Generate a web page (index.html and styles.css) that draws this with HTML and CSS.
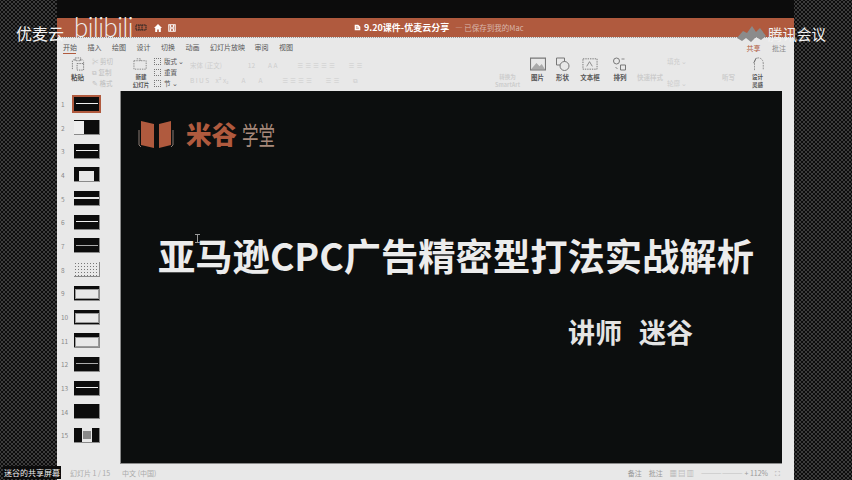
FILE: index.html
```html
<!DOCTYPE html>
<html lang="zh-CN">
<head>
  <meta charset="UTF-8">
  <title>优麦云 - 腾讯会议共享屏幕</title>
  <link rel="stylesheet" href="styles.css">
</head>
<body>
  <div class="screen">
    <div class="side"></div>

    <div class="app">
      <div class="titlebar">
        <div class="quick">
          <svg class="qicon wide" viewBox="0 0 12 7"><path d="M1 1 H11 V6 H1 Z M4 1 V6 M7 1 V6" fill="none" stroke="#222" stroke-dasharray="1.500 .5"/></svg>
          <svg class="qicon" viewBox="0 0 10 10"><path d="M5 0 L10 5 L8.5 5 L8.5 10 L6 10 L6 7 L4 7 L4 10 L1.500 10 L1.500 5 L0 5 Z" fill="#fff"/></svg>
          <svg class="qicon" viewBox="0 0 10 10"><path d="M1 1 H9 V9 H1 Z M3 1 V4 H7 V1 M3 9 V6 H7 V9" fill="none" stroke="#fff" stroke-width="1.300"/></svg>
        </div>
        <div class="doc">
          <svg class="qicon small" viewBox="0 0 10 10"><path d="M1 1 H6 L9 4 V9 H1 Z" fill="#fff"/><path d="M3 4 H5 M3 6 H7" stroke="#b05a3e"/></svg>
          <span class="doc-name">9.20课件-优麦云分享</span>
          <span class="doc-state">— 已保存到我的Mac</span>
        </div>
      </div>

      <div class="tabs">
        <span class="tab active">开始</span>
        <span class="tab">插入</span>
        <span class="tab">绘图</span>
        <span class="tab">设计</span>
        <span class="tab">切换</span>
        <span class="tab">动画</span>
        <span class="tab">幻灯片放映</span>
        <span class="tab">审阅</span>
        <span class="tab">视图</span>
        <span class="tab-right">共享</span>
        <span class="tab-right">批注</span>
      </div>

      <div class="ribbon">
        <div class="rb w25 first">
          <svg class="rb-icon" viewBox="0 0 16 15"><path d="M3 3 H6 M10 3 H13 M2 4 V13 M14 7 V4 M7 7 H14 V14 H7 Z M5 1 H11 V4 H5 Z" fill="none" stroke="#777" stroke-dasharray="1.500 1"/></svg>
          <span class="rb-label">粘贴</span>
        </div>
        <div class="rb-col w40 faint">
          <span>✂ 剪切</span>
          <span>⧉ 复制</span>
          <span>✎ 格式</span>
        </div>
        <div class="rb w22">
          <svg class="rb-icon" viewBox="0 0 17 13"><path d="M1 3 H14 V12 H1 Z M4 1 H8 V3" fill="none" stroke="#888" stroke-dasharray="1.500 1"/></svg>
          <span class="rb-label two">新建<br>幻灯片</span>
        </div>
        <div class="rb-col w38">
          <span><i class="box"></i>版式 ⌄</span>
          <span><i class="box"></i>重置</span>
          <span><i class="box"></i>节 ⌄</span>
        </div>
        <div class="rb-middle w300 fainter">
          <span>宋体 (正文)　　　　12　　A A　　　≡ ≡ ≡ ≡ ≡　　≡ ≡</span>
          <span>B I U S　x² x₂　　A　　A　　　≡ ≡ ≡ ≡　　≡ ≡　　⧉</span>
        </div>
        <div class="rb w35 fainter">
          <span class="rb-icon"></span>
          <span class="rb-label two">转换为<br>SmartArt</span>
        </div>
        <div class="rb w25">
          <svg class="rb-icon" viewBox="0 0 15 12"><path d="M.5 .5 H14.500 V11.500 H.5 Z" fill="none" stroke="#777"/><path d="M1 11 L6 5 L9 8 L11 6 L14 11 Z" fill="#aaa"/></svg>
          <span class="rb-label">图片</span>
        </div>
        <div class="rb w25">
          <svg class="rb-icon" viewBox="0 0 15 14"><path d="M1 1 H9 V8 H1 Z" fill="none" stroke="#777"/><circle cx="9" cy="9" r="4.500" fill="#e8e8e8" stroke="#777"/></svg>
          <span class="rb-label">形状</span>
        </div>
        <div class="rb w30">
          <svg class="rb-icon" viewBox="0 0 17 13"><path d="M1 1 H16 V12 H1 Z" fill="none" stroke="#777" stroke-dasharray="1.500 1"/><path d="M5 9 L8 4 L11 9" fill="none" stroke="#888"/></svg>
          <span class="rb-label">文本框</span>
        </div>
        <div class="rb w30">
          <svg class="rb-icon" viewBox="0 0 15 14"><circle cx="4" cy="4" r="3" fill="none" stroke="#777"/><path d="M8 8 H13 V13 H8 Z" fill="none" stroke="#777"/><path d="M9 2 H12 M3 10 L5 12" stroke="#888"/></svg>
          <span class="rb-label">排列</span>
        </div>
        <div class="rb w30 fainter">
          <span class="rb-icon"></span>
          <span class="rb-label">快速样式</span>
        </div>
        <div class="rb-col w47 fainter">
          <span>填充 ⌄</span>
          <span>轮廓 ⌄</span>
        </div>
        <div class="rb w33 fainter">
          <span class="rb-icon"></span>
          <span class="rb-label">听写</span>
        </div>
        <div class="rb w25">
          <svg class="rb-icon" viewBox="0 0 14 16"><path d="M3 15 V7 Q3 1 8 1 Q13 2 13 8 V15" fill="none" stroke="#888" stroke-dasharray="2 1"/><path d="M2 7 L5 1" stroke="#666"/></svg>
          <span class="rb-label two">设计<br>灵感</span>
        </div>
      </div>

      <div class="workspace">
        <div class="slides">
          <div class="row"><span class="num">1</span><div class="thumb current"><i class="line"></i></div></div>
          <div class="row"><span class="num">2</span><div class="thumb t-left"><i class="block"></i></div></div>
          <div class="row"><span class="num">3</span><div class="thumb"><i class="line"></i></div></div>
          <div class="row"><span class="num">4</span><div class="thumb t-box"><i class="paper small"></i></div></div>
          <div class="row"><span class="num">5</span><div class="thumb t-band"></div></div>
          <div class="row"><span class="num">6</span><div class="thumb"><i class="line"></i></div></div>
          <div class="row"><span class="num">7</span><div class="thumb"><i class="line grey"></i></div></div>
          <div class="row"><span class="num">8</span><div class="thumb t-dots"></div></div>
          <div class="row"><span class="num">9</span><div class="thumb t-box"><i class="paper"></i></div></div>
          <div class="row"><span class="num">10</span><div class="thumb t-box"><i class="paper"></i></div></div>
          <div class="row"><span class="num">11</span><div class="thumb t-box"><i class="paper"></i></div></div>
          <div class="row"><span class="num">12</span><div class="thumb"><i class="line grey"></i></div></div>
          <div class="row"><span class="num">13</span><div class="thumb"><i class="line"></i></div></div>
          <div class="row"><span class="num">14</span><div class="thumb"></div></div>
          <div class="row"><span class="num">15</span><div class="thumb t-video"><i class="play"></i></div></div>
        </div>

        <div class="slide">
          <div class="logo">
            <svg class="book" viewBox="0 0 37 29">
              <path d="M3 1 L16 4 V28 L3 25 Z M21 4 L33 1 V25 L21 28 Z" fill="#b05a3e"/>
              <path d="M1 10 V25 L3 27 M35 10 V25 L33 27" fill="none" stroke="#8a7a72"/>
            </svg>
            <span class="logo-main">米谷</span>
            <span class="logo-sub">学堂</span>
          </div>
          <h1 class="headline">亚马逊CPC广告精密型打法实战解析</h1>
          <p class="speaker">讲师<span class="speaker-name">迷谷</span></p>
          <svg class="cursor" viewBox="0 0 5 9"><path d="M0 .5 H5 M2.500 .5 V8.500 M0 8.500 H5" stroke="#999" fill="none"/></svg>
        </div>
      </div>

      <div class="statusbar">
        <span>幻灯片 1 / 15</span>
        <span>中文 (中国)</span>
        <span class="status-right">备注　批注　▦ ▤ ▥　—————— + 112%　⛶</span>
      </div>
    </div>

    <div class="side"></div>
  </div>

  <div class="mark mark-left">优麦云</div>
  <div class="mark-bili">bilibili</div>
  <div class="mark mark-right">
    <svg class="meet" viewBox="0 0 29 18"><path d="M0 13 L6 6 L10 8 L15 1 L19 7 L23 3 L29 11 L24 15 L19 12 L14 17 L9 13 L5 16 Z" fill="#8b8b8b"/></svg>
    腾讯会议
  </div>
  <div class="share-tag">迷谷的共享屏幕</div>
</body>
</html>
```

FILE: styles.css
```css
* { box-sizing: border-box; }
html, body { margin: 0; padding: 0; }
body { width: 852px; height: 480px; overflow: hidden; position: relative; background: #0c0c0c; font-family: "Noto Sans CJK SC", "Noto Sans", sans-serif; }

.screen { display: grid; grid-template-columns: 57px 737px 58px; height: 480px; }
.side { background-color: #0c0c0c; background-image: radial-gradient(#a6a6a6 .5px, transparent .8px), radial-gradient(#a6a6a6 .5px, transparent .8px); background-size: 4px 4px; background-position: 0 0, 2px 2px; }

.app { display: flex; flex-direction: column; padding-top: 18px; background: #0c0c0c; }

.titlebar { height: 19px; flex: none; display: flex; align-items: center; background: #b05a3e; color: #fff; font-size: 8px; }
.quick { display: flex; align-items: center; gap: 6px; margin-left: 78px; }
.qicon { width: 8px; height: 8px; display: block; }
.qicon.wide { width: 12px; height: 7px; margin-right: 1px; }
.qicon.small { width: 7px; height: 7px; }
.doc { display: flex; align-items: center; gap: 3px; margin-left: 178px; }
.doc-name { font-size: 9px; font-weight: bold; }
.doc-state { margin-left: 3px; color: #d9b8ac; font-size: 7.500px; }

.tabs { height: 18px; flex: none; display: flex; align-items: center; gap: 11.500px; padding-left: 6px; background: #e8e8e8; border-top: 1px dotted #999; font-size: 7px; color: #555; }
.tab { line-height: 14px; height: 14px; width: 13px; white-space: nowrap; }
.tab:nth-child(7) { width: 33px; }
.tab.active { border-bottom: 1px solid #b05a3e; }
.tab-right { color: #8a8a8a; line-height: 9px; margin-top: 4px; }
.tab:nth-child(9) + .tab-right { margin-left: auto; color: #b05a3e; }
.tab-right:last-child { margin-right: 8px; }

.ribbon { height: 36px; flex: none; display: flex; background: #e8e8e8; color: #555; font-size: 6.500px; line-height: 8px; }
.rb { flex: none; display: flex; flex-direction: column; align-items: center; padding-top: 2px; text-align: center; }
.rb.first { margin-left: 8px; }
.rb-icon { width: 16px; height: 14px; display: block; flex: none; }
.rb-label { margin-top: 2px; font-weight: bold; white-space: nowrap; }
.rb-label.two { font-size: 5.500px; }
.rb-col { flex: none; display: flex; flex-direction: column; justify-content: space-between; padding: 2px 0 4px 2px; white-space: nowrap; }
.rb-middle { flex: none; display: flex; flex-direction: column; justify-content: space-around; white-space: pre; overflow: hidden; padding: 2px 0 3px; }
.faint { color: #bdbdbd; }
.fainter { color: #cdcdcd; }
.box { display: inline-block; width: 7px; height: 7px; margin-right: 3px; border: 1px dotted #777; vertical-align: -1px; }
.w22 { width: 22px; }
.w25 { width: 25px; }
.w30 { width: 30px; }
.w33 { width: 33px; }
.w35 { width: 35px; }
.w38 { width: 38px; }
.w40 { width: 40px; }
.w47 { width: 47px; }
.w300 { width: 300px; }

.workspace { flex: 1; min-height: 0; display: flex; background: #e8e8e8; }
.slides { width: 63px; flex: none; padding-top: 1px; }
.row { height: 23.700px; display: flex; align-items: center; }
.num { width: 17px; padding-left: 4px; font-size: 6.500px; color: #888; }
.thumb { width: 26px; height: 15px; display: flex; align-items: center; justify-content: center; background: #0c0c0c; border-right: 1px solid #8a8a8a; border-bottom: 1px solid #8a8a8a; overflow: hidden; }
.thumb.current { height: 18px; width: 29px; margin-left: -2px; border: 2px solid #b05a3e; }
.line { display: block; width: 22px; height: 1px; background: #f0f0f0; }
.line.grey { background: #aaa; }
.block { display: block; width: 10px; height: 13px; background: #eee; }
.t-left { justify-content: flex-start; }
.paper { display: block; width: 24px; height: 10px; margin-top: 3px; background: #e8e8e8; border: 1px solid #999; }
.paper.small { width: 15px; height: 10px; border: 0; }
.t-band { background: linear-gradient(#0c0c0c 40%, #e8e8e8 40%, #e8e8e8 60%, #0c0c0c 60%); }
.t-dots { background-color: #e8e8e8; background-image: radial-gradient(#777 .6px, transparent .9px); background-size: 3px 3px; }
.t-video { background: linear-gradient(90deg, #0c0c0c 30%, #e8e8e8 30%, #e8e8e8 70%, #0c0c0c 70%); }
.play { display: block; width: 8px; height: 8px; background: #8a8a8a; }

.slide { flex: none; width: 662px; height: 373px; position: relative; background: #0c0e0e; border-left: 1px solid #8a8a8a; border-bottom: 1px solid #8a8a8a; padding: 28px 0 0 17px; }
.logo { display: flex; align-items: center; height: 30px; }
.book { width: 37px; height: 29px; display: block; flex: none; }
.logo-main { margin-left: 11px; font-size: 25.500px; font-weight: 900; color: #b05a3e; line-height: 30px; margin-top: -2px; }
.logo-sub { margin-left: 5px; font-size: 16.500px; color: #a88a7c; line-height: 30px; transform: scaleY(1.5); }
.headline { margin: 81px 0 0 20px; font-size: 37.300px; font-weight: bold; line-height: 50px; color: #ececec; white-space: nowrap; }
.speaker { margin: 33px 0 0 430px; font-size: 27px; font-weight: bold; line-height: 38px; color: #e4e4e4; white-space: nowrap; }
.speaker-name { margin-left: 17px; }
.cursor { position: absolute; left: 74px; top: 143px; width: 5px; height: 9px; }

.statusbar { height: 16px; flex: none; display: flex; align-items: center; gap: 12px; padding-left: 13px; background: #e8e8e8; border-top: 1px solid transparent; color: #aaa; font-size: 7px; white-space: nowrap; }
.status-right { margin-left: auto; margin-right: 14px; color: #999; }

.mark { position: absolute; color: #f2f2f2; white-space: nowrap; display: flex; align-items: center; }
.mark-left { left: 16px; top: 21px; font-size: 16px; line-height: 24px; }
.mark-right { left: 737px; top: 25px; font-size: 14.500px; line-height: 18px; gap: 2px; }
.meet { width: 29px; height: 18px; display: block; }
.mark-bili { position: absolute; left: 74px; top: 15px; height: 23px; font-family: "Lato", sans-serif; font-size: 28px; line-height: 22px; letter-spacing: -.5px; color: #eee; transform: scaleX(.92); transform-origin: left top; font-weight: 300; }
.share-tag { position: absolute; left: 3px; top: 466px; padding: 0 1px; height: 13px; line-height: 13px; background: #0c0c0c; color: #eee; font-size: 8px; white-space: nowrap; }
```
